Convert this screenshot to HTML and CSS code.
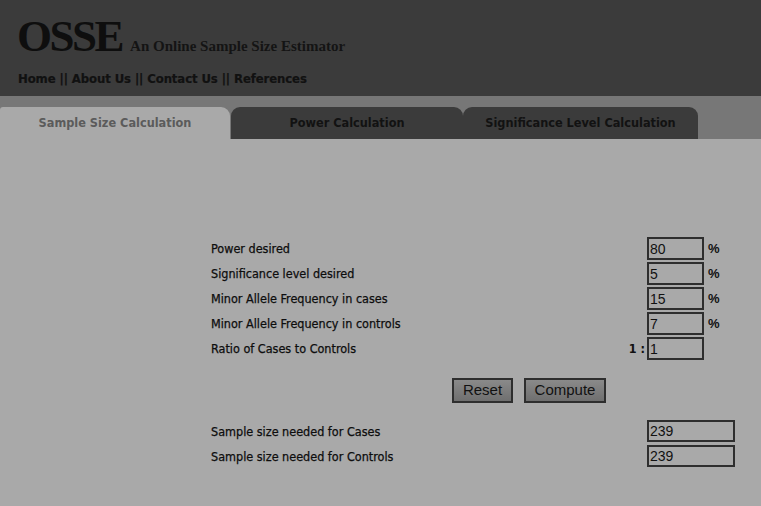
FILE: index.html
```html
<!DOCTYPE html>
<html>
<head>
<meta charset="utf-8">
<title>OSSE</title>
<link rel="stylesheet" href="styles.css">
</head>
<body>
<header class="masthead">
  <div class="brand"><span class="logo">OSSE</span><span class="tagline">An Online Sample Size Estimator</span></div>
  <nav class="nav">Home || About Us || Contact Us || References</nav>
</header>
<div class="tabbar">
  <div class="tab tab-1 active">Sample Size Calculation</div>
  <div class="tab tab-2">Power Calculation</div>
  <div class="tab tab-3">Significance Level Calculation</div>
</div>
<main class="content">
  <div class="form">
    <div class="row"><span class="label">Power desired</span><span class="pre"></span><input class="field" value="80"><span class="unit">%</span></div>
    <div class="row"><span class="label">Significance level desired</span><span class="pre"></span><input class="field" value="5"><span class="unit">%</span></div>
    <div class="row"><span class="label">Minor Allele Frequency in cases</span><span class="pre"></span><input class="field" value="15"><span class="unit">%</span></div>
    <div class="row"><span class="label">Minor Allele Frequency in controls</span><span class="pre"></span><input class="field" value="7"><span class="unit">%</span></div>
    <div class="row"><span class="label">Ratio of Cases to Controls</span><span class="pre">1 :</span><input class="field" value="1"><span class="unit"></span></div>
  </div>
  <div class="buttons">
    <button class="btn btn-reset">Reset</button>
    <button class="btn btn-compute">Compute</button>
  </div>
  <div class="form results">
    <div class="row"><span class="label">Sample size needed for Cases</span><span class="pre"></span><input class="field wide" value="239"></div>
    <div class="row"><span class="label">Sample size needed for Controls</span><span class="pre"></span><input class="field wide" value="239"></div>
  </div>
</main>
</body>
</html>
```
FILE: styles.css
```css
html, body {
  margin: 0;
  padding: 0;
  background: #a9a9a9;
}
body {
  width: 761px;
  height: 506px;
  overflow: hidden;
  font-family: "DejaVu Sans Condensed", "DejaVu Sans", sans-serif;
  color: #111;
}
.masthead {
  background: #3b3b3b;
  height: 96px;
  box-sizing: border-box;
  padding: 14px 0 0 18px;
}
.brand {
  display: flex;
  align-items: baseline;
  height: 45px;
}
.logo {
  font-family: "Liberation Serif", serif;
  font-weight: bold;
  font-size: 45px;
  letter-spacing: -2.5px;
  line-height: 45px;
  color: #0e0e0e;
  margin-left: -1px;
}
.tagline {
  font-family: "Liberation Serif", serif;
  font-weight: bold;
  font-size: 15px;
  margin-left: 8px;
  color: #141414;
}
.nav {
  margin-top: 12px;
  font-weight: bold;
  font-size: 13px;
  letter-spacing: -0.1px;
  color: #111;
  -webkit-text-stroke: 0.2px #111;
}
.tabbar {
  background: #777;
  height: 43px;
  box-sizing: border-box;
  padding-top: 11px;
  display: flex;
  width: 761px;
}
.tab {
  height: 32px;
  line-height: 32px;
  text-align: center;
  font-weight: bold;
  font-size: 12.6px;
  background: #3b3b3b;
  color: #121212;
  border-radius: 3px 9px 0 0;
}
.tab-1 { width: 230px; margin-right: 1px; }
.tab-2 { width: 232px; border-radius: 9px 9px 0 0; }
.tab-3 { width: 235px; border-radius: 9px 9px 0 0; }
.tab.active {
  background: #a9a9a9;
  color: #5b5b5b;
}
.content {
  padding: 98px 0 0 211px;
  width: 524px;
}
.form {
  display: grid;
  row-gap: 2px;
}
.row {
  display: grid;
  grid-template-columns: 1fr auto 57px 31px;
  align-items: center;
  height: 23px;
}
.label {
  font-size: 12.5px;
  color: #0d0d0d;
  -webkit-text-stroke: 0.25px #0d0d0d;
}
.pre {
  font-size: 12.5px;
  font-weight: bold;
  padding-right: 2px;
}
.unit {
  font-family: "Liberation Sans", Arial, sans-serif;
  font-weight: bold;
  font-size: 13px;
  padding-left: 4px;
}
.field {
  box-sizing: border-box;
  width: 57px;
  height: 23px;
  border: 2px solid #2e2e2e;
  background: #a9a9a9;
  padding: 0 1px;
  margin: 0;
  font-family: "Liberation Sans", Arial, sans-serif;
  font-size: 14px;
  color: #111;
  outline: none;
}
.field.wide {
  grid-column: 3 / span 2;
  width: 88px;
}
.buttons {
  display: flex;
  gap: 11px;
  margin: 18px 0 0 241px;
}
.btn {
  box-sizing: border-box;
  height: 25px;
  border: 2px solid #2e2e2e;
  background: linear-gradient(#8a8a8a, #6f6f6f);
  font-family: "Liberation Sans", Arial, sans-serif;
  font-size: 15px;
  color: #111;
  padding: 0 0 2px;
  margin: 0;
}
.btn-reset { width: 61px; }
.btn-compute { width: 82px; }
.results {
  margin-top: 17px;
  row-gap: 3px;
}
.results .row {
  height: 22px;
}
.results .field {
  height: 22px;
}
```
